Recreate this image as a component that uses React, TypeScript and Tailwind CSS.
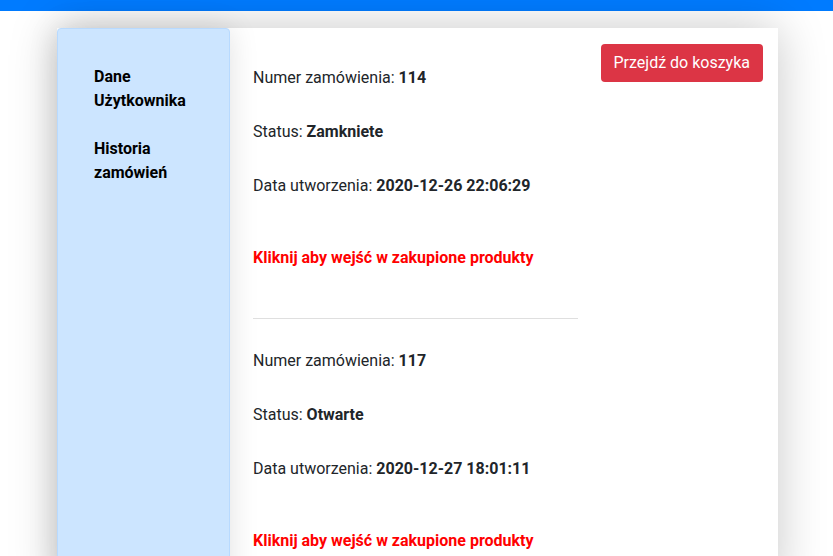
import React from "react";

function Order({ num, status, date, last }: { num: string; status: string; date: string; last?: boolean }) {
  return (
    <div className="flex flex-col">
      <p className="leading-6 h-6">Numer zamówienia: <b>{num}</b></p>
      <p className="leading-6 h-6 mt-[30px]">Status: <b>{status}</b></p>
      <p className="leading-6 h-6 mt-[30px]">Data utworzenia: <b>{date}</b></p>
      <a className="leading-6 h-6 mt-[48px] font-bold text-[#ff0000] cursor-pointer">Kliknij aby wejść w zakupione produkty</a>
      {!last && <hr className="mt-[48px] mb-[30px] border-0 border-t border-[#dfdfdf]" />}
    </div>
  );
}

export default function App() {
  return (
    <div className="h-[556px] bg-white text-[16px] text-[#212529] overflow-hidden" style={{ fontFamily: "Roboto, 'Noto Sans', sans-serif" }}>
      <div className="h-[11px] bg-[#007bff]" />
      <div className="ml-[57px] mt-[17px] w-[721px] h-[560px] bg-white flex shadow-[0_0_45px_rgba(0,0,0,0.22)]">
        <div className="w-[173px] shrink-0 bg-[#cce5ff] border border-[#b8daff] rounded-t-[4px] shadow-[0_0_30px_rgba(0,0,0,0.12)] pl-[36px] pt-[36px] font-bold text-black leading-6">
          <div>Dane<br />Użytkownika</div>
          <div className="mt-6">Historia<br />zamówień</div>
        </div>
        <div className="flex-1 flex pl-[23px] pt-[38px]">
          <div className="w-[325px] shrink-0">
            <Order num="114" status="Zamkniete" date="2020-12-26 22:06:29" />
            <Order num="117" status="Otwarte" date="2020-12-27 18:01:11" last />
          </div>
          <div className="flex-1 flex justify-end pr-[15px] -mt-[22px]">
            <button className="h-[38px] px-[13px] bg-[#dc3545] text-white rounded-[4px] leading-6 whitespace-nowrap">Przejdź do koszyka</button>
          </div>
        </div>
      </div>
    </div>
  );
}
